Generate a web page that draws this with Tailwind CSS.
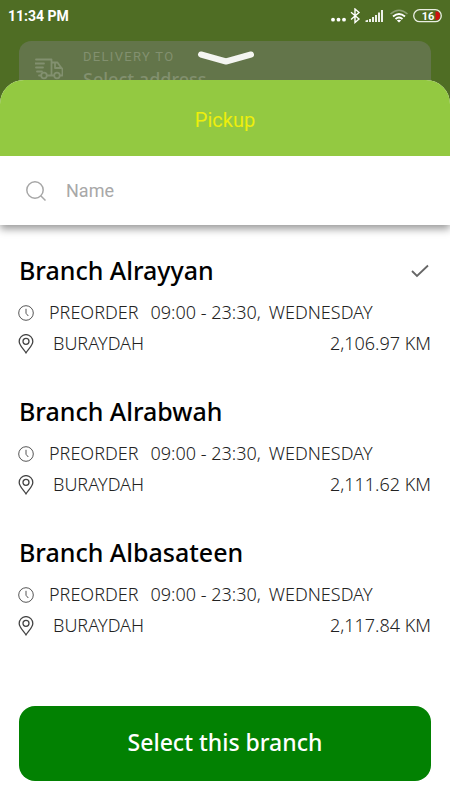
<!DOCTYPE html>
<html lang="en">
<head>
<meta charset="utf-8">
<meta name="viewport" content="width=device-width, initial-scale=1">
<title>Pickup</title>
<script src="https://cdn.jsdelivr.net/npm/@tailwindcss/browser@4"></script>
</head>
<body class="bg-[#4f6d24] font-['Noto_Sans',sans-serif]">
<svg class="hidden" aria-hidden="true">
  <symbol id="clock" viewBox="0 0 16 16"><circle cx="8" cy="8" r="7.3"/><path d="M8 3.8V8.3L10.3 11"/></symbol>
  <symbol id="pin" viewBox="0 0 16 20"><path d="M8 18.8C5.8 15.4 1.2 11.2 1.2 7.4A6.7 6.7 0 0 1 14.8 7.4C14.8 11.2 10.2 15.4 8 18.8Z"/><circle cx="8" cy="7.3" r="3"/></symbol>
  <symbol id="check" viewBox="0 0 18 14"><path d="M1 7L6 12L17 1.5"/></symbol>
</svg>
<div class="relative flex min-h-screen flex-col">
  <header class="flex h-8 shrink-0 items-center justify-between px-2 font-[Roboto,sans-serif] text-white">
    <span class="text-sm font-bold">11:34 PM</span>
    <svg class="h-4 w-[113px]" viewBox="329 8 113 16" fill="none" stroke="#fff" role="img" aria-label="Bluetooth, signal, wifi, battery 16 percent">
      <g fill="#fff" stroke="none"><circle cx="333" cy="19.7" r="1.9"/><circle cx="338.5" cy="19.7" r="1.9"/><circle cx="344" cy="19.7" r="1.9"/></g>
      <path d="M351 12.2L359 19L355 22.5V9L359 12.5L351 19.5" stroke-width="1.4"/>
      <g fill="#edf0e8" stroke="none"><path d="M365.5 22V20.5L368 19.8V22Z"/><path d="M369 19h2v3h-2zM372 17h2v5h-2zM375 15h2v7h-2zM378 12.5h2v9.5h-2zM381 10h2v12h-2z"/></g>
      <path d="M390.5 14Q399 6.500 407.500 14" stroke="#8b9e70" stroke-width="1.600"/>
      <path d="M393 16.500Q399 11.500 405 16.500M395.500 19Q399 16 402.500 19" stroke-width="1.900"/>
      <path d="M396.800 20.400Q399 19 401.200 20.400L399 22.500Z" fill="#fff" stroke="none"/>
      <rect x="413.700" y="9.700" width="27.600" height="12" rx="6" stroke="#e9eee2" stroke-width="1.300"/>
      <path d="M435.500 11.500H436.500C439 11.500 440 13.500 440 15.700S439 20 436.500 20H435.500Z" fill="#cf1010" stroke="none"/>
      <text x="428" y="19.700" text-anchor="middle" font-family="Roboto,sans-serif" font-size="11" font-weight="700" fill="#fff" stroke="none">16</text>
    </svg>
  </header>
  <div class="h-12 shrink-0 px-[19px] pt-[9px]">
    <div class="flex h-full gap-5 rounded-t-xl bg-[#63754a] pl-4 font-[Roboto,sans-serif] text-[#82906f]">
      <svg class="mt-[17px] h-[22px] w-7 shrink-0" viewBox="0 0 28 22" fill="none" stroke="currentColor" stroke-width="1.800" stroke-linecap="round" stroke-linejoin="round" aria-hidden="true">
        <path d="M1 1.500H16.500V17.500H12M16.500 4.500H22.500L26 9.500L27.500 11V17.500H25.500M18.500 17.500H16.500M20 4.500V10H26M0 5.500H9M1 9.500H8M2 13.500H7M4 17.500H6"/><circle cx="9" cy="17.500" r="2.800"/><circle cx="22" cy="17.500" r="2.800"/>
      </svg>
      <div class="pt-2">
        <p class="text-[13px] leading-4 tracking-widest">DELIVERY TO</p>
        <p class="font-['Noto_Sans',sans-serif] text-lg leading-7 font-medium">Select address</p>
      </div>
    </div>
  </div>
  <button type="button" aria-label="Close" class="absolute top-[50px] left-1/2 -translate-x-1/2">
    <svg class="h-4 w-[58px]" viewBox="0 0 58 16" fill="none" stroke="#f4f5f1" stroke-width="6" stroke-linecap="round" stroke-linejoin="round" aria-hidden="true"><path d="M5 4.500L30 11.500L55 4.500"/></svg>
  </button>
  <main class="relative flex grow flex-col overflow-hidden rounded-t-3xl bg-white">
    <h1 class="relative z-10 flex h-19 shrink-0 items-center justify-center bg-[#93c941] pt-1 font-[Roboto,sans-serif] text-xl text-[#eeee0c]">Pickup</h1>
    <label class="relative flex h-[69px] shrink-0 items-center gap-5 bg-white px-[26px] shadow-[0_4px_8px_0_rgba(0,0,0,0.4)]">
      <svg class="size-5 shrink-0" viewBox="0 0 20 20" fill="none" stroke="#a7a7a7" stroke-width="1.500" aria-hidden="true"><circle cx="9" cy="9" r="8.200"/><path d="M15 15L19.500 19.500"/></svg>
      <input type="search" placeholder="Name" aria-label="Name" class="min-w-0 grow font-[Roboto,sans-serif] text-lg text-gray-800 outline-none placeholder:text-[#a8a8a8]">
    </label>
    <form class="flex grow flex-col px-[19px] pt-[30px] pb-[19px]">
      <div class="flex flex-col gap-[37px] text-lg leading-[31px] font-light text-[#222]">
        <label class="block">
          <input type="radio" name="branch" class="peer sr-only" checked>
          <span class="mb-[11px] flex items-center justify-between text-[25px] font-medium text-black peer-[:not(:checked)]:[&>svg]:hidden">Branch Alrayyan<svg class="mr-[2px] h-[14px] w-[18px]" fill="none" stroke="#666" stroke-width="1.800" aria-hidden="true"><use href="#check"/></svg></span>
          <span class="flex items-center"><svg class="-ml-px mr-[15px] size-4" fill="none" stroke="#555" aria-hidden="true"><use href="#clock"/></svg><span class="mr-3">PREORDER</span><span class="mr-2">09:00 - 23:30,</span><span>WEDNESDAY</span></span>
          <span class="flex items-center"><svg class="-ml-px mr-[19px] h-5 w-4" fill="none" stroke="#444" stroke-width="1.300" aria-hidden="true"><use href="#pin"/></svg><span class="grow">BURAYDAH</span><span>2,106.97 KM</span></span>
        </label>
        <label class="block">
          <input type="radio" name="branch" class="peer sr-only">
          <span class="mb-[11px] flex items-center justify-between text-[25px] font-medium text-black peer-[:not(:checked)]:[&>svg]:hidden">Branch Alrabwah<svg class="mr-[2px] h-[14px] w-[18px]" fill="none" stroke="#666" stroke-width="1.800" aria-hidden="true"><use href="#check"/></svg></span>
          <span class="flex items-center"><svg class="-ml-px mr-[15px] size-4" fill="none" stroke="#555" aria-hidden="true"><use href="#clock"/></svg><span class="mr-3">PREORDER</span><span class="mr-2">09:00 - 23:30,</span><span>WEDNESDAY</span></span>
          <span class="flex items-center"><svg class="-ml-px mr-[19px] h-5 w-4" fill="none" stroke="#444" stroke-width="1.300" aria-hidden="true"><use href="#pin"/></svg><span class="grow">BURAYDAH</span><span>2,111.62 KM</span></span>
        </label>
        <label class="block">
          <input type="radio" name="branch" class="peer sr-only">
          <span class="mb-[11px] flex items-center justify-between text-[25px] font-medium text-black peer-[:not(:checked)]:[&>svg]:hidden">Branch Albasateen<svg class="mr-[2px] h-[14px] w-[18px]" fill="none" stroke="#666" stroke-width="1.800" aria-hidden="true"><use href="#check"/></svg></span>
          <span class="flex items-center"><svg class="-ml-px mr-[15px] size-4" fill="none" stroke="#555" aria-hidden="true"><use href="#clock"/></svg><span class="mr-3">PREORDER</span><span class="mr-2">09:00 - 23:30,</span><span>WEDNESDAY</span></span>
          <span class="flex items-center"><svg class="-ml-px mr-[19px] h-5 w-4" fill="none" stroke="#444" stroke-width="1.300" aria-hidden="true"><use href="#pin"/></svg><span class="grow">BURAYDAH</span><span>2,117.84 KM</span></span>
        </label>
      </div>
      <button type="button" class="mt-auto h-[75px] shrink-0 rounded-2xl bg-[#028102] pb-[2px] text-[23px] font-medium text-white">Select this branch</button>
    </form>
  </main>
</div>
</body>
</html>
